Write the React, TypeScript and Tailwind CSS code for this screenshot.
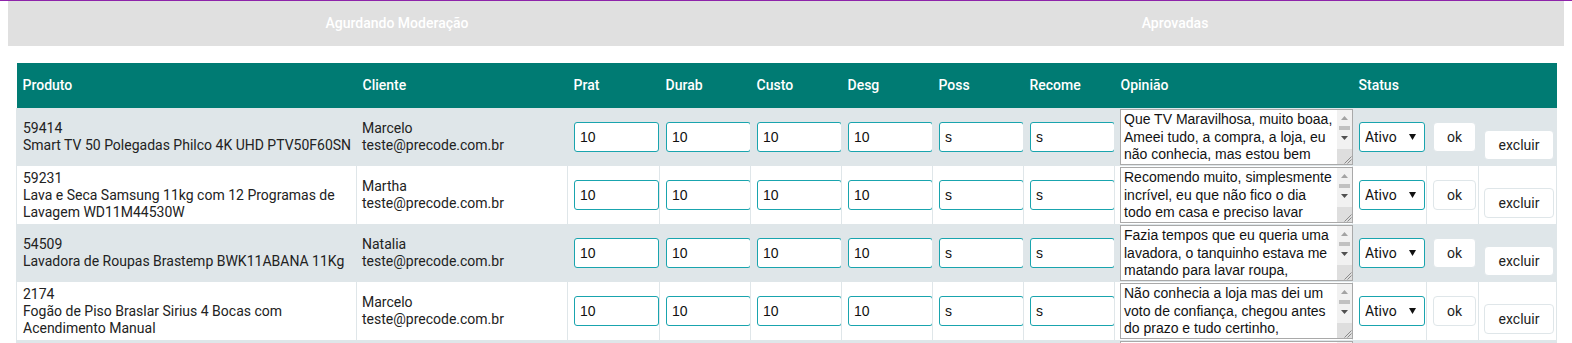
import React from "react";

type Row = {
  id: string;
  name: string;
  client: string;
  opinion: string;
};

const rows: Row[] = [
  {
    id: "59414",
    name: "Smart TV 50 Polegadas Philco 4K UHD PTV50F60SN",
    client: "Marcelo",
    opinion:
      "Que TV Maravilhosa, muito boaa, Ameei tudo, a compra, a loja, eu não conhecia, mas estou bem satisfeito com tudo, a entrega foi rápida e o produto chegou bem embalado, recomendo a todos que estão pensando em comprar, vale muito a pena, imagem perfeita e som excelente, nota dez para a loja e para o produto.",
  },
  {
    id: "59231",
    name: "Lava e Seca Samsung 11kg com 12 Programas de Lavagem WD11M44530W",
    client: "Martha",
    opinion:
      "Recomendo muito, simplesmente incrível, eu que não fico o dia todo em casa e preciso lavar roupa todos os dias, agora coloco para lavar e secar e quando chego está tudo pronto, economizo tempo e energia, a entrega foi antes do prazo e o atendimento foi ótimo, parabéns a toda a equipe pelo excelente trabalho.",
  },
  {
    id: "54509",
    name: "Lavadora de Roupas Brastemp BWK11ABANA 11Kg",
    client: "Natalia",
    opinion:
      "Fazia tempos que eu queria uma lavadora, o tanquinho estava me matando para lavar roupa, finalmente ficou muito mais fácil, a máquina é silenciosa, lava muito bem e tem vários programas, chegou antes do prazo e bem embalada, estou muito feliz com a compra e com certeza vou comprar de novo nesta loja.",
  },
  {
    id: "2174",
    name: "Fogão de Piso Braslar Sirius 4 Bocas com Acendimento Manual",
    client: "Marcelo",
    opinion:
      "Não conhecia a loja mas dei um voto de confiança, chegou antes do prazo e tudo certinho, maravilhoso, o fogão é bonito, fácil de limpar e as bocas esquentam rápido, o forno é grande e assa muito bem, a entrega foi tranquila e o produto veio sem nenhum defeito, recomendo a loja para todos os meus amigos e familiares.",
  },
  {
    id: "60118",
    name: "Geladeira Frost Free Electrolux 371 Litros Branca",
    client: "Natalia",
    opinion:
      "Produto excelente, chegou rápido e muito bem embalado, a geladeira é espaçosa e silenciosa, gela muito bem e não faz gelo, estou muito satisfeita com a compra e recomendo a todos, com certeza voltarei a comprar nesta loja, atendimento nota dez e entrega antes do prazo combinado, muito obrigada.",
  },
];

const scores = ["10", "10", "10", "10", "s", "s"];

function SelectStatus() {
  return (
    <div className="relative w-[66px] h-[30px]">
      <select
        defaultValue="Ativo"
        className="appearance-none w-[66px] h-[30px] bg-white border border-[#19a4ae] rounded-[3px] pl-[5px] text-[14px] text-[#111] outline-none"
        style={{ fontFamily: "Roboto, sans-serif" }}
      >
        <option>Ativo</option>
        <option>Inativo</option>
      </select>
      <svg
        className="pointer-events-none absolute right-[9px] top-[12px]"
        width="7"
        height="6"
        viewBox="0 0 7 6"
      >
        <path d="M0 0 H7 L3.5 6 Z" fill="#111" />
      </svg>
    </div>
  );
}

function Scrollbar() {
  return (
    <svg
      className="pointer-events-none absolute right-px top-px"
      width="15"
      height="54"
      viewBox="0 0 15 54"
    >
      <rect x="0" y="0" width="15" height="39" fill="#f1f1f1" />
      <path d="M4 10 H11 L7.5 6 Z" fill="#a3a3a3" />
      <rect x="2" y="16" width="11" height="4" fill="#c1c1c1" />
      <path d="M4 26 H11 L7.5 30 Z" fill="#505050" />
      <rect x="0" y="39" width="15" height="15" fill="#dedede" />
      <path d="M7.5 53.5 L14.5 46.5 M10.5 53.5 L14.5 49.5" stroke="#8a8a8a" strokeWidth="1" />
    </svg>
  );
}

function Opinion({ text }: { text: string }) {
  return (
    <div className="relative w-[233px] h-[56px]">
      <textarea
        defaultValue={text}
        className="block w-[233px] h-[56px] overflow-hidden resize-none bg-white border border-[#a9a9a9] pl-[3px] pr-[18px] py-px text-[14px] leading-[17.5px] text-[#111] outline-none"
        style={{ fontFamily: "'Liberation Sans', Arial, sans-serif" }}
      />
      <Scrollbar />
    </div>
  );
}

export default function App() {
  return (
    <div
      className="w-[1572px] bg-white text-[#222]"
      style={{ fontFamily: "Roboto, 'Noto Sans', sans-serif" }}
    >
      <div className="h-px bg-[#8e24aa]" />
      <div className="mx-2 h-[45px] bg-[#e0e0e0] flex text-white text-[14px] font-medium">
        <div className="flex-1 flex items-center justify-center pb-px">
          Agurdando Moderação
        </div>
        <div className="flex-1 flex items-center justify-center pb-px">
          Aprovadas
        </div>
      </div>

      <table className="mt-[17px] ml-4 w-[1540px] table-fixed border-collapse text-[14px] leading-[17px]">
        <colgroup>
          <col className="w-[340px]" />
          <col className="w-[211px]" />
          <col className="w-[92px]" />
          <col className="w-[91px]" />
          <col className="w-[91px]" />
          <col className="w-[91px]" />
          <col className="w-[91px]" />
          <col className="w-[91px]" />
          <col className="w-[238px]" />
          <col className="w-[74px]" />
          <col className="w-[52px]" />
          <col className="w-[78px]" />
        </colgroup>
        <thead>
          <tr className="bg-[#007b73] text-white h-[45px]">
            {[
              "Produto",
              "Cliente",
              "Prat",
              "Durab",
              "Custo",
              "Desg",
              "Poss",
              "Recome",
              "Opinião",
              "Status",
              "",
              "",
            ].map((h, i) => (
              <th
                key={i}
                className="text-left font-medium pl-[6px] align-middle"
              >
                {h}
              </th>
            ))}
          </tr>
        </thead>
        <tbody>
          {rows.map((r, idx) => (
            <tr
              key={r.id}
              className={idx % 2 === 0 ? "bg-[#dfe6e9]" : "bg-white"}
            >
              <td className="border-l border-[#dfe6e9] pl-[6px] pr-[2px] py-px align-middle">
                <div>{r.id}</div>
                <div>{r.name}</div>
              </td>
              <td className="border-l border-[#dfe6e9] pl-[5px] pr-[2px] py-px align-middle">
                <div>{r.client}</div>
                <div>teste@precode.com.br</div>
              </td>
              {scores.map((s, i) => (
                <td
                  key={i}
                  className="border-l border-[#dfe6e9] pl-[6px] pr-px py-px align-middle"
                >
                  <input
                    defaultValue={s}
                    className="block w-[85px] h-[30px] bg-white border border-[#19a4ae] rounded-[3px] px-[5px] text-[14px] text-[#111] outline-none"
                    style={{ fontFamily: "'Liberation Sans', Arial, sans-serif" }}
                  />
                </td>
              ))}
              <td className="border-l border-[#dfe6e9] pl-[5px] pr-0 py-px align-middle">
                <Opinion text={r.opinion} />
              </td>
              <td className="border-l border-[#dfe6e9] pl-[6px] py-px align-middle">
                <SelectStatus />
              </td>
              <td className="border-l border-[#dfe6e9] pl-[6px] py-px align-middle">
                <button className="block w-[43px] h-[30px] bg-white border border-[#dfe6e9] rounded-[4px] text-[14px] text-[#222]">
                  ok
                </button>
              </td>
              <td className="border-l border-r border-[#dfe6e9] pl-[5px] py-px align-middle">
                <button className="block mt-4 w-[70px] h-[30px] bg-white border border-[#dfe6e9] rounded-[4px] text-[14px] text-[#222]">
                  excluir
                </button>
              </td>
            </tr>
          ))}
        </tbody>
      </table>
    </div>
  );
}
